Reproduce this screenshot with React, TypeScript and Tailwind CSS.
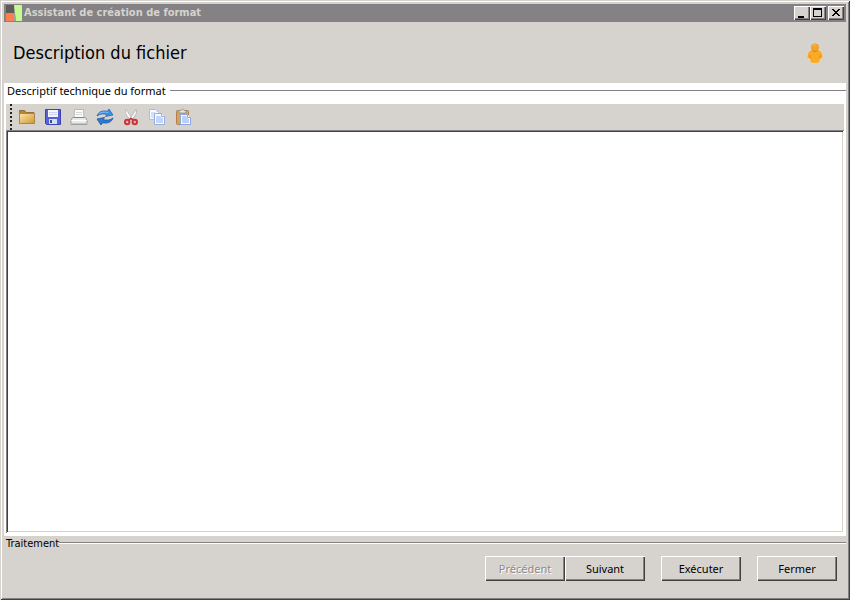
import { useState } from 'react'
import type { ReactNode } from 'react'

function LogoIcon() {
  return (
    <svg width="18" height="18" viewBox="0 0 18 18" aria-hidden="true">
      <rect x="2" y="1" width="8" height="8" fill="#5f5b5b" />
      <rect x="2" y="9" width="8" height="8" fill="#fb7f4b" />
      <path d="M10 1h8v16h-6z" fill="#c4fb8e" />
      <path d="M10 6l2 11h-2z" fill="#a6a3a4" />
    </svg>
  )
}

function PersonIcon() {
  return (
    <svg width="20" height="24" viewBox="0 0 20 24" aria-hidden="true">
      <path d="M6.500 9C4 9.500 2 12 2 15.500c0 1.700 1.400 2.300 3 2v3.700c1.500 1.600 8.500 1.600 10 0v-3.700c1.600.3 3-.3 3-2 0-3.500-2-6-4.500-6.500z" fill="#fbaa26" stroke="#ecdcb6" strokeWidth=".8" />
      <path d="M5 14v4M15 14v4" stroke="#d68b1c" strokeWidth=".8" />
      <circle cx="10" cy="6.500" r="3.700" fill="#f7a423" stroke="#d99a3a" strokeWidth=".6" />
      <path d="M6.800 9.500c1.500 1.500 4.900 1.500 6.400 0" fill="none" stroke="#cf8519" strokeWidth=".8" />
      <path d="M8 5c.7-.9 1.500-1.200 2.500-1.100" fill="none" stroke="#ffc865" />
    </svg>
  )
}

function FolderIcon() {
  return (
    <svg width="18" height="18" viewBox="0 0 18 18" aria-hidden="true">
      <defs>
        <linearGradient id="folder" x2="1" y2="1">
          <stop stopColor="#ffe6a4" />
          <stop offset="1" stopColor="#cf9638" />
        </linearGradient>
      </defs>
      <path d="M1.500 4.500v-2h5l1.500 2h8v10h-14.500z" fill="#b98332" stroke="#94703a" />
      <path d="M1.500 5.500h15v10h-15z" fill="url(#folder)" stroke="#ad8443" />
    </svg>
  )
}

function SaveIcon() {
  return (
    <svg width="18" height="18" viewBox="0 0 18 18" aria-hidden="true">
      <path d="M1.500 1.500h15v15h-14l-1-1z" fill="#5862d4" stroke="#3a42b6" />
      <rect x="4" y="2" width="10" height="7" fill="#f4f6ff" />
      <path d="M5 4.500h8M5 6.500h8" stroke="#ccd2f0" />
      <rect x="5" y="11" width="8" height="5" fill="#d7dcf3" />
      <rect x="6" y="12" width="2" height="3" fill="#3e49ad" />
    </svg>
  )
}

function PrintIcon() {
  return (
    <svg width="18" height="18" viewBox="0 0 18 18" aria-hidden="true">
      <path d="M4.500 1.500h9l.5 8H4z" fill="#fafafa" stroke="#b9b9b9" />
      <path d="M6 4.500h6M6 6.500h6" stroke="#d6d6d6" />
      <path d="M2.500 9.500h13l1.500 3v4H1v-4z" fill="#e9e9e9" stroke="#a0a0a0" />
      <path d="M4 9.500h10" stroke="#858585" />
      <path d="M1.500 12.500h15" stroke="#ffffff" />
      <path d="M2 15.500h14" stroke="#c3c3c3" />
    </svg>
  )
}

function RefreshIcon() {
  return (
    <svg width="18" height="18" viewBox="0 0 18 18" aria-hidden="true">
      <path d="M1 8C2.200 4 6 2.200 11.500 3.200L13 1l4 6-7.500 1.500 1.200-2.200C7 5.500 3.800 5.800 1 8z" fill="#3c91e4" stroke="#2566b8" strokeWidth=".8" />
      <path d="M17 10c-1.200 4-5 5.800-10.500 4.800L5 17l-4-6 7.500-1.500-1.200 2.200c3.700.8 6.900.5 9.700-1.700z" fill="#2d7bd2" stroke="#1c559f" strokeWidth=".8" />
      <path d="M3.500 5.500C5.500 4 8 3.800 12 4.500" fill="none" stroke="#80c2f7" />
    </svg>
  )
}

function CutIcon() {
  return (
    <svg width="18" height="18" viewBox="0 0 18 18" aria-hidden="true">
      <path d="M4 1.500c-1 2-.7 3.500.5 5.300L8 12l2-1.500z" fill="#ffffff" stroke="#b5b5b5" strokeWidth=".8" />
      <path d="M14 1.500c1 2 .7 3.500-.5 5.300L10 12l-2-1.500z" fill="#fafafa" stroke="#a9a9a9" strokeWidth=".8" />
      <ellipse cx="5.200" cy="14" rx="2.200" ry="2.200" fill="#e9b9b8" stroke="#cb353a" strokeWidth="2" />
      <ellipse cx="12.800" cy="14" rx="2.200" ry="2.200" fill="#e9b9b8" stroke="#cb353a" strokeWidth="2" />
      <path d="M6.500 12L9 10.500l2.500 1.500" fill="none" stroke="#cb353a" strokeWidth="1.600" />
    </svg>
  )
}

function CopyIcon() {
  return (
    <svg width="18" height="18" viewBox="0 0 18 18" aria-hidden="true">
      <path d="M1.500 1.500h6l3 3v7h-9z" fill="#f7faff" stroke="#a9bde4" />
      <path d="M3 4h4v2h2v4H3z" fill="#d5e1fa" />
      <path d="M6.500 5.500h7l3 3v8h-10z" fill="#f7faff" stroke="#98aede" />
      <path d="M8 8h4l2 2h1v5H8z" fill="#c4d5fa" />
      <path d="M13.500 5.500v3h3" fill="#ffffff" stroke="#98aede" />
    </svg>
  )
}

function PasteIcon() {
  return (
    <svg width="18" height="18" viewBox="0 0 18 18" aria-hidden="true">
      <rect x="2.500" y="2.500" width="12" height="14" rx="1" fill="#d9a15a" stroke="#b58043" />
      <path d="M5 5V2.500h2c0-2 3-2 3 0h2V5z" fill="#e2e2de" stroke="#8f8f8a" strokeWidth=".8" />
      <path d="M6.500 6.500h7l3 3v7h-10z" fill="#f8faff" stroke="#8ba6dc" />
      <path d="M8 8h4l2 3h1v4H8z" fill="#bccffa" />
      <path d="M13.500 6.500v3h3" fill="#ffffff" stroke="#8ba6dc" />
    </svg>
  )
}

const tools = [
  { label: 'Ouvrir', icon: <FolderIcon /> },
  { label: 'Enregistrer', icon: <SaveIcon /> },
  { label: 'Imprimer', icon: <PrintIcon /> },
  { label: 'Actualiser', icon: <RefreshIcon /> },
  { label: 'Couper', icon: <CutIcon /> },
  { label: 'Copier', icon: <CopyIcon /> },
  { label: 'Coller', icon: <PasteIcon /> },
]

function CaptionButton({ label, children }: { label: string; children: ReactNode }) {
  return (
    <button
      type="button"
      aria-label={label}
      className="flex h-[14px] w-4 items-center justify-center bg-[#d6d3ce] shadow-[inset_1px_1px_#fff,inset_-1px_-1px_#404040,inset_-2px_-2px_#848284]"
    >
      <svg width="16" height="14" viewBox="0 0 16 14" shapeRendering="crispEdges" aria-hidden="true">{children}</svg>
    </button>
  )
}

function WizardButton({ children, disabled }: { children: ReactNode; disabled?: boolean }) {
  return (
    <button
      type="button"
      disabled={disabled}
      className="h-[25px] w-20 bg-[#d6d3ce] font-['Noto_Sans',sans-serif] text-black shadow-[inset_1px_1px_#fff,inset_-1px_-1px_#404040,inset_-2px_-2px_#848284] disabled:text-[#8d8a8a] disabled:[text-shadow:1px_1px_#fff]"
    >
      {children}
    </button>
  )
}

export default function App() {
  const [content, setContent] = useState('')

  return (
    <div className="flex min-h-screen flex-col bg-[#d6d3ce] p-1 font-['DejaVu_Sans_Condensed','DejaVu_Sans',sans-serif] text-[11px] leading-4 text-black shadow-[inset_1px_1px_#d6d3ce,inset_-1px_-1px_#404040,inset_2px_2px_#fff,inset_-2px_-2px_#848284]">
      {/* Barre de titre */}
      <header className="flex h-[18px] shrink-0 items-center bg-[#848284] pr-[2px]">
        <LogoIcon />
        <span className="ml-[2px] flex-1 font-bold text-[#d6d3ce]">Assistant de création de format</span>
        <CaptionButton label="Réduire"><path d="M4 10h6v2H4z" /></CaptionButton>
        <CaptionButton label="Agrandir"><path d="M3 2h9v9H3zM4 4v6h7V4z" fillRule="evenodd" /></CaptionButton>
        <span className="w-[2px]" />
        <CaptionButton label="Fermer la fenêtre"><path d="M4 3h2v1h1v1h2V4h1V3h2v1h-1v1h-1v1H9v1h1v1h1v1h1v1h-2V9H9V8H7v1H6v1H4V9h1V8h1V7h1V6H6V5H5V4H4z" /></CaptionButton>
      </header>

      <div className="flex h-[61px] shrink-0 items-center justify-between pr-[21px] pl-[9px]">
        <h1 className="text-[18px] leading-6">Description du fichier</h1>
        <PersonIcon />
      </div>

      {/* Zone de description */}
      <main className="flex flex-1 flex-col bg-white pb-[3px]">
        <div className="flex h-[21px] shrink-0 items-start pl-[3px]">
          <label htmlFor="descriptif" className="font-['Noto_Sans',sans-serif]">Descriptif technique du format</label>
          <span className="mt-[7px] ml-1 h-px flex-1 bg-[#848284]" />
        </div>
        <div className="mx-[2px] flex flex-1 flex-col">
          <div role="toolbar" className="flex h-[26px] shrink-0 items-center bg-[#d6d3ce] pl-1">
            <span className="mr-[6px] h-[26px] w-[2px] bg-[repeating-linear-gradient(to_bottom,#222_0_2px,transparent_2px_4px)]" />
            <div className="flex gap-2">
              {tools.map((tool) => (
                <button key={tool.label} type="button" aria-label={tool.label} title={tool.label}>
                  {tool.icon}
                </button>
              ))}
            </div>
          </div>
          <textarea
            id="descriptif"
            value={content}
            onChange={(e) => setContent(e.target.value)}
            className="w-full flex-1 resize-none bg-white p-1 shadow-[inset_1px_1px_#848284,inset_-1px_-1px_#fff,inset_2px_2px_#404040,inset_-2px_-2px_#d6d3ce] outline-none"
          />
        </div>
      </main>

      {/* Boutons de l'assistant */}
      <footer className="h-[60px] shrink-0">
        <div className="flex h-5 items-start pl-[2px]">
          <span>Traitement</span>
          <span className="mt-[6px] h-[2px] flex-1 border-t border-b border-t-[#848284] border-b-white" />
        </div>
        <div className="flex justify-end gap-4 pr-[9px]">
          <div className="flex">
            <WizardButton disabled>Précédent</WizardButton>
            <WizardButton>Suivant</WizardButton>
          </div>
          <WizardButton>Exécuter</WizardButton>
          <WizardButton>Fermer</WizardButton>
        </div>
      </footer>
    </div>
  )
}
